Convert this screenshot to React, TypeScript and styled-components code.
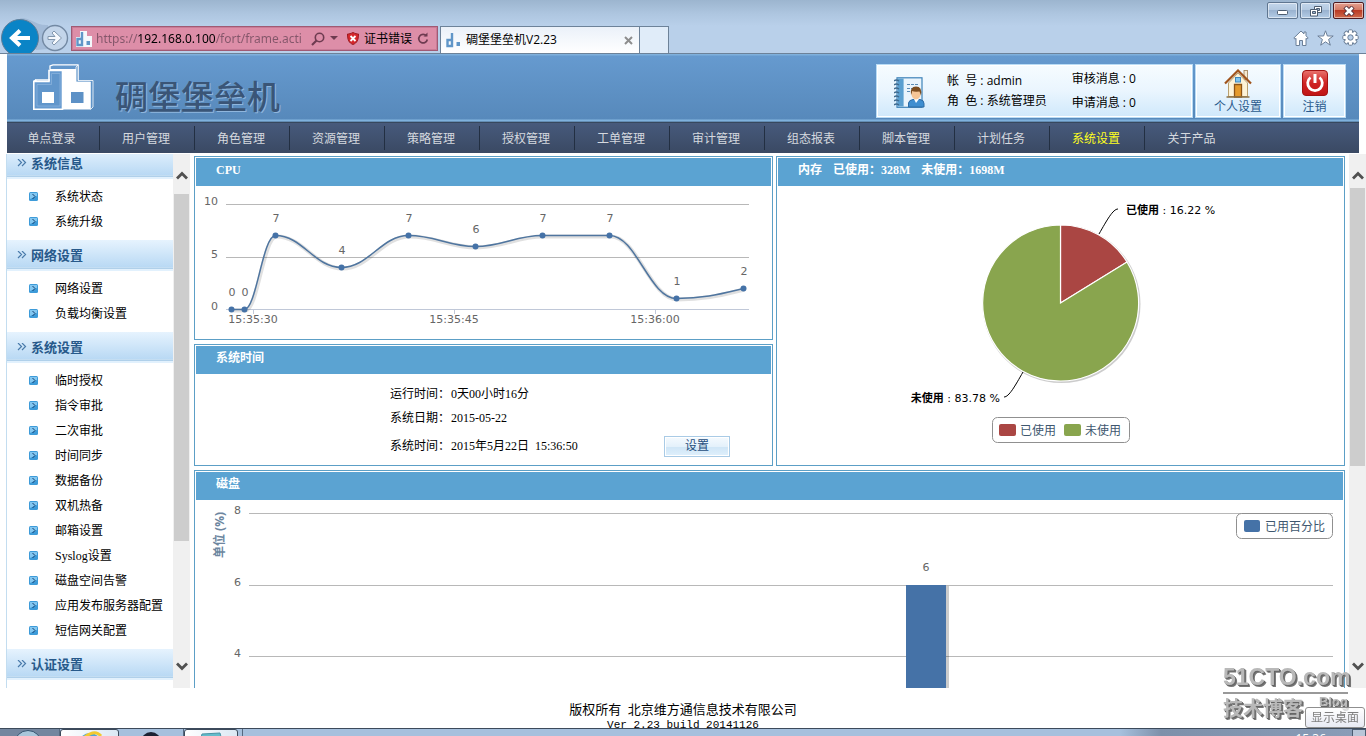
import React from "react";
import styled, { createGlobalStyle, css } from "styled-components";

const sans = `"Open Sans", "Noto Sans CJK SC", sans-serif`;
const song = `"Liberation Serif", "Noto Sans CJK SC", serif`;
const chart = `"DejaVu Sans", "Noto Sans CJK SC", sans-serif`;

const GlobalStyle = createGlobalStyle`
  * { box-sizing: border-box; }
  body { margin: 0; background: #fff; color: #000; font: 12px/16px ${song}; }
  button { margin: 0; padding: 0; border: 0; background: none; font: inherit; color: inherit; cursor: pointer; }
  a { color: inherit; text-decoration: none; }
  ul, dl, dd, h1, h2, p { margin: 0; padding: 0; }
  ul { list-style: none; }
  svg { display: block; flex: none; }
`;

const Desktop = styled.div`
  display: flex;
  flex-direction: column;
  height: 100vh;
  overflow: hidden;
`;

/* ---------- browser frame ---------- */

const Frame = styled.header`
  flex: none;
  display: flex;
  height: 54px;
  border-bottom: 1px solid #6d8299;
  background: linear-gradient(#9cb5cf, #aec6e0 14px, #b9d0ea 26px, #b9d0ea);
  font-family: ${sans};
`;

const NavButtons = styled.div`
  display: flex;
  width: 71px;
  padding-top: 17px;
`;

const AddressBar = styled.form`
  display: flex;
  align-items: center;
  width: 367px;
  height: 25px;
  margin-top: 26px;
  padding: 0 4px;
  border: 1px solid #a05a74;
  background: #dd8ea8;
  box-shadow: inset 0 0 0 1px #c97b97;
`;

const AddressInput = styled.input`
  width: 212px;
  margin-left: 4px;
  padding: 0;
  border: 0;
  outline: 0;
  font: 12px/20px "Noto Sans", sans-serif;
  color: transparent;
  background: linear-gradient(90deg, #84566a 42px, #000 42px, #000 119px, #84566a 119px);
  background-clip: text;
`;

const BarButton = styled.button<{ $gap?: number }>`
  display: flex;
  align-items: center;
  gap: 5px;
  margin-left: ${(p) => p.$gap ?? 5}px;
  white-space: nowrap;
`;

const Tabs = styled.div`
  display: flex;
  align-items: flex-end;
  margin-left: 2px;
`;

const Tab = styled.div`
  display: flex;
  align-items: center;
  gap: 4px;
  width: 200px;
  height: 27px;
  padding: 0 6px 0 5px;
  border: 1px solid #6d8299;
  border-bottom: 0;
  background: linear-gradient(#ebf1f9, #fff);
`;

const TabTitle = styled.span`
  flex: 1;
`;

const NewTab = styled.button`
  width: 29px;
  height: 27px;
  border: 1px solid #6d8299;
  border-width: 1px 1px 0 0;
  background: #e0ecf9;
`;

const WindowSide = styled.div`
  display: flex;
  flex-direction: column;
  align-items: flex-end;
  gap: 10px;
  margin-left: auto;
  padding: 2px 2px 0 0;
`;

const WindowButtons = styled.div`
  display: flex;
  gap: 2px;
`;

const WindowButton = styled.button<{ $close?: boolean }>`
  display: grid;
  place-items: center;
  width: 31px;
  height: 17px;
  border: 1px solid ${(p) => (p.$close ? "#4d1a20" : "#5f7690")};
  border-radius: 2px;
  box-shadow: inset 0 0 0 1px rgba(255, 255, 255, 0.5);
  background: ${(p) =>
    p.$close
      ? "linear-gradient(#e5a090, #d27863 48%, #ba3a24 50%, #cf6a4c)"
      : "linear-gradient(#c3d6eb, #b2c8e0 48%, #9ab3d0 50%, #b4cce6)"};
`;

const Tools = styled.div`
  display: flex;
  gap: 8px;
  padding-right: 5px;
`;

/* ---------- application header ---------- */

const Banner = styled.div`
  flex: none;
  display: flex;
  align-items: flex-start;
  height: 69px;
  margin: 0 7px;
  padding: 10px 13px 0 26px;
  border-bottom: 1px solid #37485e;
  background: linear-gradient(#7fb0dc 1px, #669acf 2px, #5789bb 65px, #84b6e0 66px, #7aaedb 67px, #4e6c8c);
  font-family: ${sans};
`;

const ProductName = styled.h1`
  padding: 11px 0 0 21px;
  font: 500 33px/40px "Noto Sans CJK SC", sans-serif;
  color: #3a5577;
  text-shadow: 1px 1px 0 #8fb6dd;
`;

const cardStyle = css`
  height: 54px;
  border: 1px solid #b9dcf5;
  box-shadow: inset 0 0 0 1px #fff;
  background: linear-gradient(#f6fcff, #eaf5fe 50%, #cfe8fb);
`;

const Cards = styled.div`
  display: flex;
  gap: 2px;
  margin-left: auto;
`;

const AccountCard = styled.div`
  ${cardStyle}
  display: flex;
  width: 317px;
  padding: 0 0 0 17px;
`;

const AccountPicture = styled.div`
  padding-top: 12px;
`;

const InfoList = styled.dl<{ $inset: number; $top: number; $row: number }>`
  margin-left: ${(p) => p.$inset}px;
  padding-top: ${(p) => p.$top}px;
  line-height: ${(p) => p.$row}px;
  white-space: pre;
`;

const InfoRow = styled.div`
  display: flex;
`;

const ShortcutCard = styled.button<{ $width: number }>`
  ${cardStyle}
  display: flex;
  flex-direction: column;
  align-items: center;
  width: ${(p) => p.$width}px;
  padding-top: 4px;
  color: #2b5b8d;
`;

const MainNav = styled.nav`
  flex: none;
  height: 30px;
  margin: 0 7px 1px;
  background: linear-gradient(#475a7c, #3a4963);
  font-family: ${sans};
`;

const NavList = styled.ul`
  display: flex;
  padding-top: 3px;
`;

const NavItem = styled.li<{ $active?: boolean }>`
  width: 95px;
  height: 24px;
  padding-right: 2px;
  border-right: 1px solid #222f42;
  line-height: 26px;
  text-align: center;
  color: ${(p) => (p.$active ? "#ffff1e" : "#d5d9df")};
  &:first-child { width: 93px; padding-right: 3px; }
  &:last-child { border: 0; }
`;

/* ---------- body ---------- */

const Workspace = styled.div`
  flex: 1;
  min-height: 0;
  display: flex;
  padding-left: 6px;
`;

const Sidebar = styled.aside`
  display: flex;
  width: 184px;
  border-left: 1px solid #c3ddf0;
`;

const Menu = styled.div`
  flex: 1;
  overflow: hidden;
`;

const MenuGroup = styled.section`
  &:first-child { margin-top: -6px; }
`;

const MenuHeading = styled.h2`
  display: flex;
  align-items: center;
  gap: 4px;
  height: 31px;
  padding-left: 10px;
  font: bold 13px/31px ${song};
  color: #27598a;
  background: linear-gradient(#e6f3fe, #b9d9f4 27px, #d8ebfa 27px, #b0d0ea 28px, #b0d0ea 29px, #e2f1fd 29px);
`;

const MenuList = styled.ul`
  padding: 5px 0 6px;
`;

const MenuItem = styled.li`
  height: 25px;
  a { display: flex; align-items: center; gap: 17px; height: 25px; padding-left: 22px; white-space: nowrap; }
`;

const ScrollTrack = styled.div`
  display: flex;
  flex-direction: column;
  align-items: center;
  width: 17px;
  background: #f0f0f0;
`;

const ScrollButton = styled.button<{ $end?: boolean }>`
  display: grid;
  place-items: center;
  width: 17px;
  height: ${(p) => (p.$end ? 44 : 26)}px;
  margin-top: ${(p) => (p.$end ? "auto" : "8px")};
`;

const ScrollThumb = styled.div<{ $length: number; $top: number }>`
  width: 15px;
  height: ${(p) => p.$length}%;
  margin-top: ${(p) => p.$top}px;
  background: #cdcdcd;
`;

const Dashboard = styled.main`
  flex: 1;
  min-width: 0;
  display: grid;
  grid-template-columns: 579fr 569fr;
  grid-template-rows: auto auto auto;
  align-content: start;
  gap: 4px 3px;
  padding: 2px 4px 0;
  overflow: hidden;
`;

const Panel = styled.section<{ $tall?: boolean; $wide?: boolean }>`
  padding: 1px;
  border: 1px solid #5c9fc6;
  ${(p) => p.$tall && "grid-row: 1 / 3; grid-column: 2;"}
  ${(p) => p.$wide && "grid-column: 1 / 3;"}
`;

const PanelTitle = styled.h2`
  display: flex;
  gap: 11px;
  height: 28px;
  padding-left: 20px;
  font: bold 12px/25px ${song};
  color: #fff;
  background: #5ba3d2;
`;

const ChartSvg = styled.svg`
  width: 100%;
  height: auto;
  font: 11px ${chart};
  fill: #666;
`;

const LegendText = styled.text`
  font: 12px ${sans};
  fill: #3e576f;
`;

const AxisTitle = styled.text`
  font: bold 12px ${sans};
  fill: #6d869f;
`;

const TimeGrid = styled.div`
  display: grid;
  grid-template-columns: 194fr 61px 213px 66px 41fr;
  grid-template-rows: 24px 24px 32px;
  align-items: center;
  padding: 8px 0 2px;
`;

const TimeLabel = styled.span`
  grid-column: 2;
`;

const SetButton = styled.button`
  height: 21px;
  border: 1px solid #a9cbe6;
  box-shadow: inset 0 0 0 1px #fff;
  background: linear-gradient(#f5fafe, #e4f1fb 50%, #cfe5f6 52%, #dff0fc);
  font-family: ${sans};
  color: #1f4e7c;
`;

const Footer = styled.footer`
  flex: none;
  height: 40px;
  padding-top: 14px;
  overflow: hidden;
  text-align: center;
  font-size: 13px;
`;

const Version = styled.p`
  font: 11px/14px "Liberation Mono", monospace;
`;

/* ---------- task bar and overlays ---------- */

const TaskBar = styled.footer`
  flex: none;
  display: flex;
  height: 8px;
  overflow: hidden;
  border-top: 1px solid #3c4a5b;
  background: linear-gradient(90deg, #a6c0dd 82%, #7d90aa 85%, #8a9db8);
`;

const TaskCell = styled.div<{ $width: number; $look?: "dark" | "open" }>`
  display: flex;
  justify-content: center;
  width: ${(p) => p.$width}px;
  height: 40px;
  border-right: 1px solid #56697f;
  ${(p) => p.$look === "dark" && "background: #73869f;"}
  ${(p) => p.$look === "open" && "background: linear-gradient(90deg, #fff, #dbe8f4); border: 1px solid #3c4a5b; border-radius: 3px;"}
`;

const Clock = styled.time`
  margin-left: auto;
  padding: 2px 26px 0 0;
  font: 12px/16px ${sans};
  color: #fff;
`;

const ShowDesktop = styled.button`
  width: 14px;
  height: 40px;
  border: 1px solid #4b5c70;
  background: #b9c6d8;
`;

const Watermark = styled.div`
  position: fixed;
  right: 18px;
  bottom: 14px;
  width: 125px;
  color: #b9b9b9;
  text-shadow: 1px 1px 0 #666, 2px 2px 0 #777;
`;

const WatermarkName = styled.p`
  border-bottom: 2px solid #999;
  font: bold 23px/30px "Liberation Sans", sans-serif;
`;

const WatermarkLine = styled.p`
  display: flex;
  justify-content: space-between;
  font: bold 20px/28px "Noto Sans CJK SC", sans-serif;
  small { font: bold 13px/16px "Liberation Sans", sans-serif; }
`;

const Tip = styled.div`
  position: fixed;
  right: 1px;
  bottom: 8px;
  width: 60px;
  height: 21px;
  border: 1px solid #8f8f8f;
  border-radius: 3px;
  background: linear-gradient(rgba(255, 255, 255, 0.75), rgba(228, 231, 242, 0.85));
  font: 12px/19px ${sans};
  text-align: center;
  color: #7f7f7f;
`;

/* ---------- drawings ---------- */

const BackIcon = () => (
  <svg width="71" height="36" viewBox="0 17 71 36">
    <path d="M20 18C32 18 36 26 48 25L48 49L36 50Z" fill="#94aecb" opacity=".6" />
    <circle cx="20" cy="38" r="18.5" fill="#0a84c6" stroke="#5f7d98" />
    <path d="M30 38H13M20 30.5L12 38L20 45.5" fill="none" stroke="#fff" strokeWidth="4" />
    <circle cx="55" cy="38" r="12.5" fill="#c3d5ea" stroke="#7389a3" strokeWidth="1.4" />
    <path d="M48 36.5H55L52 33L54 31L61.500 38L54 45L52 43L55 39.500H48Z" fill="#f6f9fd" stroke="#8196ad" />
  </svg>
);

const SiteIcon = ({ plain }: { plain?: boolean }) => (
  <svg width="16" height="16" viewBox="0 0 16 16">
    {!plain && <path d="M0 6H4V0H11V5H16V16H0Z" fill="#f4f8fc" />}
    <path d="M6 1V14H1.500V8H6" fill="none" stroke="#6096c8" strokeWidth="2.400" />
    <rect x="10.500" y="10" width="3.500" height="4" fill="#6096c8" />
  </svg>
);

const SearchIcon = () => (
  <svg width="14" height="14" viewBox="0 0 14 14" fill="none" stroke="#6e3b50" strokeWidth="1.600">
    <circle cx="8.500" cy="5.500" r="4.200" />
    <path d="M5.500 8.500L1 13" strokeWidth="2.200" />
  </svg>
);

const CaretIcon = () => (
  <svg width="8" height="5" viewBox="0 0 8 5"><path d="M0 0H8L4 4Z" fill="#6e3b50" /></svg>
);

const ShieldIcon = () => (
  <svg width="12" height="13" viewBox="0 0 12 13">
    <path d="M6 .5C8 1.500 10 2 11.500 2C11.500 8 10 11 6 12.500C2 11 .5 8 .5 2C2 2 4 1.500 6 .5Z" fill="#d6272d" stroke="#9d1a20" />
    <path d="M3.500 4L8.500 9M8.500 4L3.500 9" stroke="#fff" strokeWidth="1.800" />
  </svg>
);

const RefreshIcon = () => (
  <svg width="12" height="13" viewBox="0 0 12 13" fill="none" stroke="#6e3b50" strokeWidth="1.700">
    <path d="M9.500 4A4.300 4.300 0 1 0 10.300 7.500" />
    <path d="M6.500 4.500H10.500V.5Z" fill="#6e3b50" stroke="none" />
  </svg>
);

const CloseTabIcon = () => (
  <svg width="9" height="9" viewBox="0 0 9 9" stroke="#8d8d8d" strokeWidth="2"><path d="M1 1L8 8M8 1L1 8" /></svg>
);

const MinimizeIcon = () => (
  <svg width="11" height="11" viewBox="0 0 11 11"><rect x=".5" y="5.500" width="10" height="4" rx="1" fill="#fff" stroke="#4d5d70" /></svg>
);

const RestoreIcon = () => (
  <svg width="12" height="12" viewBox="0 0 12 12" stroke="#4d5d70">
    <path d="M4.500 1.500H11.500V7.500H4.500Z" fill="#fff" /><path d="M6.500 3.500H9.500V5.500H6.500Z" fill="#9ab3d0" />
    <path d="M.5 4.500H7.500V11H.5Z" fill="#fff" /><path d="M2.500 6.500H5.500V8.500H2.500Z" fill="#9ab3d0" />
  </svg>
);

const CloseIcon = () => (
  <svg width="12" height="10" viewBox="0 0 12 10">
    <path d="M2 1L10 9M10 1L2 9" stroke="#54303a" strokeWidth="4.500" /><path d="M2.500 1.500L9.500 8.500M9.500 1.500L2.500 8.500" stroke="#fff" strokeWidth="2.600" />
  </svg>
);

const ToolIcons = () => (
  <Tools>
    <button aria-label="主页"><svg width="16" height="16" viewBox="0 0 16 16" fill="#fff" stroke="#6b7f98"><path d="M8 1L.8 8L2 9.200L3 8.300V15.500H6.500V10.500H9.500V15.500H13V8.300L14 9.200L15.200 8L13 5.800V2H11V3.900Z" /></svg></button>
    <button aria-label="收藏夹"><svg width="17" height="16" viewBox="0 0 17 16" fill="#fff" stroke="#6b7f98"><path d="M8.500 .8L10.400 6H16.200L11.600 9.400L13.300 15.200L8.500 11.800L3.700 15.200L5.400 9.400L.8 6H6.600Z" /></svg></button>
    <button aria-label="工具">
      <svg width="17" height="17" viewBox="-8.500 -8.500 17 17">
        {[0, 45, 90, 135].map((a) => <rect key={a} x="-2" y="-7.700" width="4" height="15.400" rx="1" transform={`rotate(${a})`} fill="#fff" stroke="#6b7f98" />)}
        <circle r="5.300" fill="#fff" /><circle r="2.700" fill="#b9d0ea" stroke="#6b7f98" />
      </svg>
    </button>
  </Tools>
);

const Logo = () => (
  <svg width="61" height="46" viewBox="0 0 61 46">
    <path d="M0 17L3 15V17H0Z" fill="#fff" />
    <path d="M.8 45.200V17.500H16V6.500H29.500V45.200Z" fill="#669acf" stroke="#fff" strokeWidth="1.600" />
    <path d="M3 17V16H17M17 5V2L20 .8H45V17" fill="none" stroke="#fff" strokeWidth="1.300" />
    <path d="M16.500 6V5H43V17H57V45.500H30V6Z" fill="#fff" />
    <path d="M43 3L45 1V16.500H60V43L57.500 45.500V18H43Z" fill="#5f94c9" stroke="#fff" strokeWidth=".8" />
    <path d="M4 42V20.500H18.500V9.500H27V42Z" fill="#6196cb" stroke="#8db5de" strokeWidth=".7" />
    <rect x="9" y="28" width="12" height="11" fill="#fff" />
    <rect x="38" y="28" width="12.500" height="11" fill="#5d91c6" />
  </svg>
);

const AccountIcon = () => (
  <svg width="31" height="32" viewBox="0 0 31 32">
    <rect x="3" y=".8" width="25" height="29.500" fill="#e9f4fc" stroke="#3d82b8" strokeWidth="1.200" />
    <rect x="3.600" y="1.500" width="6" height="28" fill="#5a9fd0" />
    {[3, 7, 11, 15, 19, 23, 27].map((y) => <path key={y} d={`M0 ${y + 1}Q2 ${y - 1} 5 ${y + 1}`} fill="none" stroke="#406a8e" strokeWidth="1.400" />)}
    <path d="M13 7.500H24M13 11.500H24M13 14.500H18" stroke="#5b8cb5" strokeDasharray="3 1" />
    <path d="M14.500 30V26Q15 23 19 22.500H26Q30 23 30 26.500V30Z" fill="#3f8ed0" stroke="#2e6ca4" />
    <path d="M20 22L22 26L25 22Z" fill="#fff" />
    <ellipse cx="22" cy="17" rx="4.600" ry="5.400" fill="#f5c596" />
    <path d="M17 18Q15.500 9.500 22 9.500Q28.500 9.500 27 18.500Q26 16 25.500 14.500Q20 15 18.200 14Q18 16.500 17 18Z" fill="#7c4d20" />
  </svg>
);

const HouseIcon = () => (
  <svg width="28" height="30" viewBox="0 0 28 30">
    <rect x="20" y="1.500" width="3.500" height="9" fill="#f5ead2" stroke="#9c7c50" strokeWidth=".8" />
    <path d="M4.500 14L14 4L23.500 14V27.500H4.500Z" fill="#fdf3d8" stroke="#b9a070" />
    <path d="M1 14.500L14 1.500L27 14.500" fill="none" stroke="#a0541c" strokeWidth="2.200" />
    <rect x="11.500" y="8.500" width="5" height="4.500" fill="#7ec4f0" stroke="#3f88be" />
    <path d="M10.500 28V15.500H17.500V28Z" fill="#e59a2c" stroke="#8d5416" strokeWidth="1.300" />
    <path d="M2.500 28H25.500" stroke="#8b7145" strokeWidth="1.500" />
  </svg>
);

const PowerIcon = () => (
  <svg width="28" height="30" viewBox="0 0 28 30">
    <defs><linearGradient id="power" x2="0" y2="1"><stop stopColor="#e9736e" /><stop offset=".5" stopColor="#cf2323" /><stop offset="1" stopColor="#c01414" /></linearGradient></defs>
    <rect x="1.500" y="1.500" width="25" height="25" rx="3.500" fill="url(#power)" stroke="#a31212" />
    <path d="M9.500 8.500A7.300 7.300 0 1 0 18.500 8.500" fill="none" stroke="#fff" strokeWidth="2.800" />
    <path d="M14 5V14" stroke="#fff" strokeWidth="3" />
  </svg>
);

const DoubleArrow = () => (
  <svg width="10" height="10" viewBox="0 0 10 10" fill="none" stroke="#4a7bab" strokeWidth="1.200"><path d="M1 0L4.500 3.500L1 7M5 0L8.500 3.500L5 7" /></svg>
);

const Bullet = () => (
  <svg width="9" height="9" viewBox="0 0 9 9">
    <rect width="9" height="9" rx="1.500" fill="#3d9bd9" /><path d="M1 1H8V4L1 7Z" fill="#9ad6f8" opacity=".75" />
    <path d="M3.500 2L6 4.500L3.500 7" fill="none" stroke="#123f70" strokeWidth="1" />
  </svg>
);

const Chevron = ({ down }: { down?: boolean }) => (
  <svg width="12" height="9" viewBox="0 0 12 9" fill="none" stroke="#505050" strokeWidth="2.800">
    <path d={down ? "M1 1.500L6 6.500L11 1.500" : "M1 7.500L6 2.500L11 7.500"} />
  </svg>
);

const ScrollBar = ({ length, top }: { length: number; top: number }) => (
  <ScrollTrack>
    <ScrollButton aria-label="向上滚动"><Chevron /></ScrollButton>
    <ScrollThumb $length={length} $top={top} />
    <ScrollButton $end aria-label="向下滚动"><Chevron down /></ScrollButton>
  </ScrollTrack>
);

/* ---------- charts ---------- */

const cpuPoints = [
  { x: 35, y: 123, v: 0 }, { x: 48, y: 123, v: 0 }, { x: 79, y: 49, v: 7 }, { x: 145, y: 81, v: 4 },
  { x: 212, y: 49, v: 7 }, { x: 279, y: 60, v: 6 }, { x: 346, y: 49, v: 7 }, { x: 413, y: 49, v: 7 },
  { x: 480, y: 112, v: 1 }, { x: 547, y: 102, v: 2 },
];
const cpuLine =
  "M35 123H48C60 123 66 49 79 49C106 49 118 81 145 81C172 81 185 49 212 49C239 49 252 60 279 60C306 60 319 49 346 49H413C440 49 453 112 480 112C507 112 522 108 547 102";

const CpuChart = () => (
  <ChartSvg viewBox="0 0 575 152" role="img" aria-label="CPU">
    <path d="M30 18.500H553M30 71.500H553" stroke="#b8b8b8" />
    <path d="M30 123.500H553M57.500 123V128M258.500 123V128M459.500 123V128" stroke="#c0c8d8" />
    {[["10", 19], ["5", 72], ["0", 124]].map(([t, y]) => <text key={t} x="22" y={y} textAnchor="end">{t}</text>)}
    {[["15:35:30", 57], ["15:35:45", 258], ["15:36:00", 459]].map(([t, x]) => <text key={t} x={x} y="137" textAnchor="middle">{t}</text>)}
    <g transform="translate(.5 .5)">
      <path d={cpuLine} transform="translate(1 1)" fill="none" stroke="#000" strokeOpacity=".12" strokeWidth="4" />
      <path d={cpuLine} fill="none" stroke="#4f759f" strokeWidth="1.500" />
      {cpuPoints.map((p) => <circle key={p.x} cx={p.x} cy={p.y} r="3" fill="#4572a7" />)}
    </g>
    {cpuPoints.map((p) => <text key={p.x} x={p.x + 1} y={p.y - 13} textAnchor="middle">{p.v}</text>)}
  </ChartSvg>
);

const MemoryChart = () => (
  <ChartSvg viewBox="0 0 565 278" role="img" aria-label="内存">
    <circle cx="283.500" cy="118" r="79" fill="#000" opacity=".2" />
    <g stroke="#fff" strokeWidth="1.200">
      <path d="M282.500 117V39A78 78 0 0 1 349 76Z" fill="#aa4643" />
      <path d="M282.500 117L349 76A78 78 0 1 1 282.500 39Z" fill="#89a54e" />
    </g>
    <path d="M321 48C329 34 335 23 340 23M245 186C237 200 231 211 226 211" fill="none" stroke="#000" />
    <text x="348" y="28" fill="#000"><tspan fontWeight="bold">已使用</tspan> : 16.22 %</text>
    <text x="222" y="216" fill="#000" textAnchor="end"><tspan fontWeight="bold">未使用</tspan> : 83.78 %</text>
    <rect x="214.500" y="231.500" width="137" height="25" rx="5" fill="none" stroke="#909090" />
    <rect x="221" y="238" width="17" height="12" rx="2" fill="#aa4643" />
    <LegendText x="242" y="249">已使用</LegendText>
    <rect x="286" y="238" width="17" height="12" rx="2" fill="#89a54e" />
    <LegendText x="307" y="249">未使用</LegendText>
  </ChartSvg>
);

const DiskChart = () => (
  <ChartSvg viewBox="0 0 1147 240" role="img" aria-label="磁盘">
    <path d="M53 13.500H1137M53 85.500H1137M53 156.500H1137M53 228.500H1137" stroke="#b8b8b8" />
    {[["8", 14], ["6", 86], ["4", 157]].map(([t, y]) => <text key={t} x="45" y={y} textAnchor="end">{t}</text>)}
    <AxisTitle transform="translate(28 35) rotate(-90)" textAnchor="middle">单位 (%)</AxisTitle>
    <rect x="712" y="86" width="41" height="154" fill="#000" opacity=".2" />
    <rect x="710" y="85" width="40" height="155" fill="#4572a7" />
    <text x="730" y="71" textAnchor="middle">6</text>
    <rect x="1040.500" y="13.500" width="96" height="25" rx="5" fill="#fff" stroke="#909090" />
    <rect x="1048" y="20" width="16" height="12" rx="2" fill="#4572a7" />
    <LegendText x="1069" y="31">已用百分比</LegendText>
  </ChartSvg>
);

/* ---------- page ---------- */

const navItems = ["单点登录", "用户管理", "角色管理", "资源管理", "策略管理", "授权管理", "工单管理", "审计管理", "组态报表", "脚本管理", "计划任务", "系统设置", "关于产品"];

const menu = [
  { title: "系统信息", items: ["系统状态", "系统升级"] },
  { title: "网络设置", items: ["网络设置", "负载均衡设置"] },
  { title: "系统设置", items: ["临时授权", "指令审批", "二次审批", "时间同步", "数据备份", "双机热备", "邮箱设置", "Syslog设置", "磁盘空间告警", "应用发布服务器配置", "短信网关配置"] },
  { title: "认证设置", items: [] },
];

export default function App() {
  return (
    <Desktop>
      <GlobalStyle />
      <Frame>
        <NavButtons><BackIcon /></NavButtons>
        <AddressBar onSubmit={(e) => e.preventDefault()}>
          <SiteIcon />
          <AddressInput aria-label="地址" defaultValue="https://192.168.0.100/fort/frame.acti" />
          <BarButton type="button" aria-label="搜索" $gap={3}><SearchIcon /><CaretIcon /></BarButton>
          <BarButton type="button" $gap={9}><ShieldIcon />证书错误</BarButton>
          <BarButton type="button" aria-label="刷新"><RefreshIcon /></BarButton>
        </AddressBar>
        <Tabs>
          <Tab>
            <SiteIcon plain />
            <TabTitle>碉堡堡垒机V2.23</TabTitle>
            <button aria-label="关闭标签页"><CloseTabIcon /></button>
          </Tab>
          <NewTab aria-label="新建标签页" />
        </Tabs>
        <WindowSide>
          <WindowButtons>
            <WindowButton aria-label="最小化"><MinimizeIcon /></WindowButton>
            <WindowButton aria-label="还原"><RestoreIcon /></WindowButton>
            <WindowButton $close aria-label="关闭"><CloseIcon /></WindowButton>
          </WindowButtons>
          <ToolIcons />
        </WindowSide>
      </Frame>

      <Banner>
        <Logo />
        <ProductName>碉堡堡垒机</ProductName>
        <Cards>
          <AccountCard>
            <AccountPicture><AccountIcon /></AccountPicture>
            <InfoList $inset={22} $top={6} $row={20}>
              <InfoRow><dt>帐  号 : </dt><dd>admin</dd></InfoRow>
              <InfoRow><dt>角  色 : </dt><dd>系统管理员</dd></InfoRow>
            </InfoList>
            <InfoList $inset={25} $top={2} $row={24}>
              <InfoRow><dt>审核消息 : </dt><dd>0</dd></InfoRow>
              <InfoRow><dt>申请消息 : </dt><dd>0</dd></InfoRow>
            </InfoList>
          </AccountCard>
          <ShortcutCard $width={86}><HouseIcon />个人设置</ShortcutCard>
          <ShortcutCard $width={63}><PowerIcon />注销</ShortcutCard>
        </Cards>
      </Banner>
      <MainNav>
        <NavList>
          {navItems.map((t) => <NavItem key={t} $active={t === "系统设置"}><a href="#">{t}</a></NavItem>)}
        </NavList>
      </MainNav>

      <Workspace>
        <Sidebar>
          <Menu>
            {menu.map((g) => (
              <MenuGroup key={g.title}>
                <MenuHeading><DoubleArrow />{g.title}</MenuHeading>
                <MenuList>
                  {g.items.map((t) => <MenuItem key={t}><a href="#"><Bullet />{t}</a></MenuItem>)}
                </MenuList>
              </MenuGroup>
            ))}
          </Menu>
          <ScrollBar length={65} top={6} />
        </Sidebar>
        <Dashboard>
          <Panel>
            <PanelTitle>CPU</PanelTitle>
            <CpuChart />
          </Panel>
          <Panel $tall>
            <PanelTitle><span>内存</span><span>已使用：328M</span><span>未使用：1698M</span></PanelTitle>
            <MemoryChart />
          </Panel>
          <Panel>
            <PanelTitle>系统时间</PanelTitle>
            <TimeGrid>
              <TimeLabel>运行时间：</TimeLabel><span>0天00小时16分</span>
              <TimeLabel>系统日期：</TimeLabel><span>2015-05-22</span>
              <TimeLabel>系统时间：</TimeLabel><span>2015年5月22日&nbsp; 15:36:50</span>
              <SetButton>设置</SetButton>
            </TimeGrid>
          </Panel>
          <Panel $wide>
            <PanelTitle>磁盘</PanelTitle>
            <DiskChart />
          </Panel>
        </Dashboard>
        <ScrollBar length={52} top={0} />
      </Workspace>

      <Footer>
        <p>版权所有&nbsp; 北京维方通信息技术有限公司</p>
        <Version>Ver 2.23 build 20141126</Version>
      </Footer>

      <TaskBar>
        <TaskCell $width={60} $look="dark"><svg width="28" height="28"><circle cx="12" cy="15" r="13.500" fill="#a9c6da" stroke="#33526e" /></svg></TaskCell>
        <TaskCell $width={59} $look="open"><svg width="30" height="20"><path d="M5 18A10 12 0 0 1 25 18" fill="none" stroke="#4fa3d8" strokeWidth="6" /><path d="M10 7Q20 -1 26 6" fill="none" stroke="#f2c92f" strokeWidth="3" /></svg></TaskCell>
        <TaskCell $width={65}><svg width="22" height="20"><circle cx="11" cy="13" r="10" fill="#1b2133" /></svg></TaskCell>
        <TaskCell $width={54} $look="open"><svg width="26" height="20"><path d="M4 4L22 3L26 18H0Z" fill="#63bccb" stroke="#4993a5" /></svg></TaskCell>
        <TaskCell $width={5} />
        <Clock>15:36</Clock>
        <ShowDesktop aria-label="显示桌面" />
      </TaskBar>

      <Watermark>
        <WatermarkName>51CTO.com</WatermarkName>
        <WatermarkLine>技术博客<small>Blog</small></WatermarkLine>
      </Watermark>
      <Tip role="tooltip">显示桌面</Tip>
    </Desktop>
  );
}
